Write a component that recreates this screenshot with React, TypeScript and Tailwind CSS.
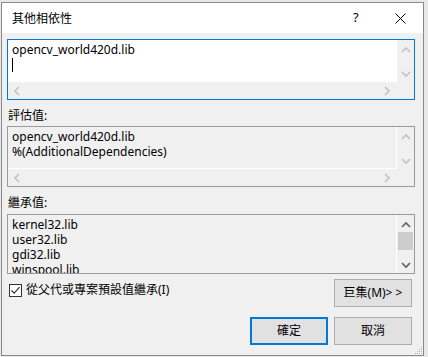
import React from 'react';

const FONT = { fontFamily: '"Noto Sans", "Noto Sans CJK TC", sans-serif' };

function Chevron({ dir, dark }: { dir: 'up' | 'down' | 'left' | 'right'; dark?: boolean }) {
  const pts: Record<string, string> = {
    up: '1,6 5,2 9,6',
    down: '1,2 5,6 9,2',
    left: '6,1 2,5 6,9',
    right: '2,1 6,5 2,9',
  };
  const vertical = dir === 'up' || dir === 'down';
  return (
    <svg width={vertical ? 10 : 8} height={vertical ? 8 : 10} viewBox={vertical ? '0 0 10 8' : '0 0 8 10'}>
      <polyline points={pts[dir]} fill="none" stroke={dark ? '#606060' : '#c2c2c2'} strokeWidth="1.6" />
    </svg>
  );
}

function ScrollBox({
  lines,
  white,
  focused,
  cursor,
}: {
  lines: string[];
  white?: boolean;
  focused?: boolean;
  cursor?: boolean;
}) {
  return (
    <div
      className={`w-[408px] h-[61px] border flex flex-col ${
        focused ? 'border-[#0078d7]' : 'border-[#9a9a9a]'
      } bg-[#f0f0f0]`}
    >
      <div className="flex h-[42px]">
        <div
          className={`w-[389px] border-r border-b border-white pl-[4px] pt-[2px] text-[12px] leading-[15px] text-black ${
            white ? 'bg-white' : 'bg-[#f0f0f0]'
          }`}
        >
          {lines.map((l) => (
            <div key={l}>{l}</div>
          ))}
          {cursor && <div className="w-[1px] h-[14px] bg-black mt-[1px]" />}
        </div>
        <div className="flex-1 flex flex-col items-center justify-between pt-[6px] pb-[4px]">
          <Chevron dir="up" />
          <Chevron dir="down" />
        </div>
      </div>
      <div className="flex-1 flex items-center justify-between pl-[5px] pr-[23px]">
        <Chevron dir="left" />
        <Chevron dir="right" />
      </div>
    </div>
  );
}

export default function App() {
  return (
    <div className="w-[428px] h-[357px] bg-[#e8e8e8] overflow-hidden" style={FONT}>
      <div className="ml-[1px] mt-[2px] w-[423px] h-[354px] border border-[#8a8a8a] flex flex-col">
        {/* title bar */}
        <div className="h-[30px] bg-white flex items-center pl-[10px] text-[12px] text-black">
          <span className="flex-1 mt-[1px]">其他相依性</span>
          <span className="w-[12px] mr-[30px] text-[13px]">?</span>
          <svg width="11" height="11" viewBox="0 0 11 11" className="mr-[17px]">
            <path d="M0.5 0.5 L10.5 10.5 M10.5 0.5 L0.5 10.5" stroke="#000" strokeWidth="1" />
          </svg>
        </div>

        {/* body */}
        <div className="flex-1 bg-[#f0f0f0] pl-[5px] pt-[6px] text-black text-[12px] flex flex-col">
          <ScrollBox lines={['opencv_world420d.lib']} white focused cursor />

          <div className="h-[26px] pt-[7px] pl-[1px] leading-[18px]">評估值:</div>
          <ScrollBox lines={['opencv_world420d.lib', '%(AdditionalDependencies)']} />

          <div className="h-[27px] pt-[7px] pl-[1px] leading-[18px]">繼承值:</div>
          <div className="w-[408px] h-[60px] border border-[#9a9a9a] flex bg-[#f0f0f0]">
            <div className="w-[389px] border-r border-white pl-[4px] pt-[2px] leading-[15px] overflow-hidden">
              <div>kernel32.lib</div>
              <div>user32.lib</div>
              <div>gdi32.lib</div>
              <div>winspool.lib</div>
            </div>
            <div className="flex-1 flex flex-col items-center">
              <div className="h-[17px] flex items-center justify-center pt-[2px]">
                <Chevron dir="up" dark />
              </div>
              <div className="w-[15px] h-[18px] bg-[#cdcdcd]" />
              <div className="flex-1 flex items-end pb-[4px]">
                <Chevron dir="down" dark />
              </div>
            </div>
          </div>

          <div className="w-[408px] flex justify-between mt-[5px]">
            <label className="flex items-center gap-[4px] pl-[2px] mt-[3px] h-[16px]">
              <span className="w-[13px] h-[13px] border border-[#333] bg-white flex items-center justify-center">
                <svg width="11" height="11" viewBox="0 0 11 11">
                  <polyline points="1.5,5.5 4.2,8.2 9.5,2.2" fill="none" stroke="#333" strokeWidth="1.2" />
                </svg>
              </span>
              <span>從父代或專案預設值繼承(I)</span>
            </label>
            <button className="w-[78px] h-[28px] mr-[3px] bg-[#e1e1e1] border border-[#adadad] text-[12px] text-black">
              巨集(M)&gt; &gt;
            </button>
          </div>

          <div className="w-[408px] flex justify-end gap-[6px] mt-[10px] pr-[3px]">
            <button className="w-[78px] h-[28px] bg-[#e1e1e1] border-2 border-[#0078d7] text-[12px] text-black">
              確定
            </button>
            <button className="w-[78px] h-[28px] bg-[#e1e1e1] border border-[#adadad] text-[12px] text-black">
              取消
            </button>
          </div>

          {/* resize grip */}
          <div className="flex-1 flex justify-end items-end">
            <svg width="8" height="8" viewBox="0 0 8 8">
              <g fill="#b5b5b5">
                <rect x="6" y="0" width="1" height="1" />
                <rect x="4" y="2" width="1" height="1" />
                <rect x="6" y="2" width="1" height="1" />
                <rect x="2" y="4" width="1" height="1" />
                <rect x="4" y="4" width="1" height="1" />
                <rect x="6" y="4" width="1" height="1" />
                <rect x="0" y="6" width="1" height="1" />
                <rect x="2" y="6" width="1" height="1" />
                <rect x="4" y="6" width="1" height="1" />
                <rect x="6" y="6" width="1" height="1" />
              </g>
            </svg>
          </div>
        </div>
      </div>
    </div>
  );
}
